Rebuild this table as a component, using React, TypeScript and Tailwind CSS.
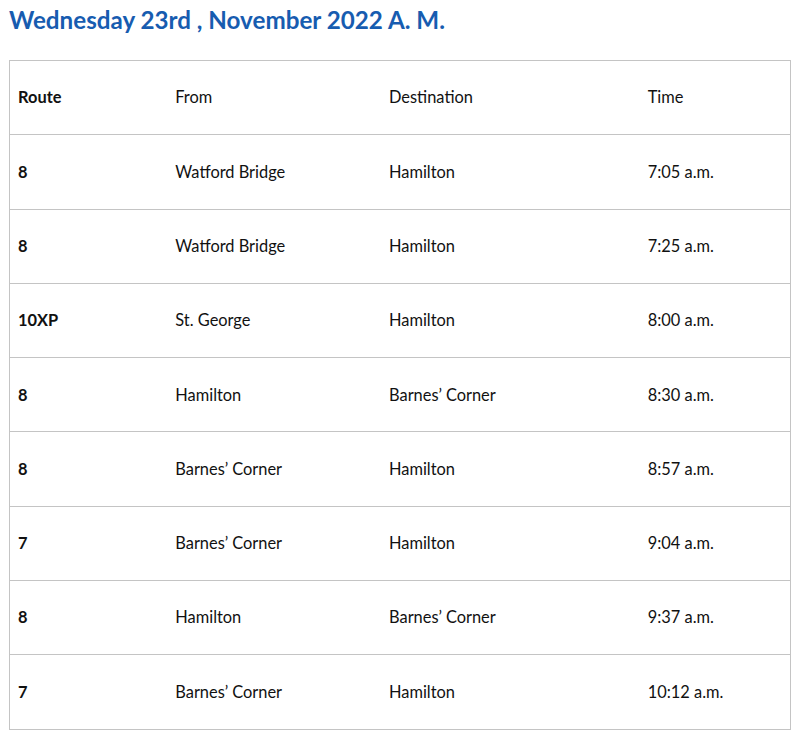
import React from "react";

const rows = [
  ["8", "Watford Bridge", "Hamilton", "7:05 a.m."],
  ["8", "Watford Bridge", "Hamilton", "7:25 a.m."],
  ["10XP", "St. George", "Hamilton", "8:00 a.m."],
  ["8", "Hamilton", "Barnes’ Corner", "8:30 a.m."],
  ["8", "Barnes’ Corner", "Hamilton", "8:57 a.m."],
  ["7", "Barnes’ Corner", "Hamilton", "9:04 a.m."],
  ["8", "Hamilton", "Barnes’ Corner", "9:37 a.m."],
  ["7", "Barnes’ Corner", "Hamilton", "10:12 a.m."],
];

export default function App() {
  return (
    <div className="w-[800px] h-[736px] bg-white overflow-hidden" style={{ fontFamily: "Lato, 'Noto Sans', sans-serif" }}>
      <h1 className="pl-[9px] pt-[5px] h-[60px] text-[24.2px] leading-[30px] font-bold text-[#175cb0]">
        Wednesday 23rd , November 2022 A. M.
      </h1>
      <table className="ml-[9px] w-[782px] border-collapse border border-[#c4c4c4] text-[16.4px] text-[#111]">
        <colgroup>
          <col className="w-[157px]" />
          <col className="w-[214px]" />
          <col className="w-[259px]" />
          <col className="w-[152px]" />
        </colgroup>
        <tbody>
          <tr className="h-[74.3px] border-b border-[#c4c4c4]">
            <td className="pl-[8px] pr-[9px] font-bold">Route</td>
            <td className="px-[9px]">From</td>
            <td className="px-[9px]">Destination</td>
            <td className="px-[9px]">Time</td>
          </tr>
          {rows.map((r, i) => (
            <tr key={i} className="h-[74.3px] border-b border-[#c4c4c4]">
              <td className="pl-[8px] pr-[9px] font-bold">{r[0]}</td>
              <td className="px-[9px]">{r[1]}</td>
              <td className="px-[9px]">{r[2]}</td>
              <td className="px-[9px]">{r[3]}</td>
            </tr>
          ))}
        </tbody>
      </table>
    </div>
  );
}
